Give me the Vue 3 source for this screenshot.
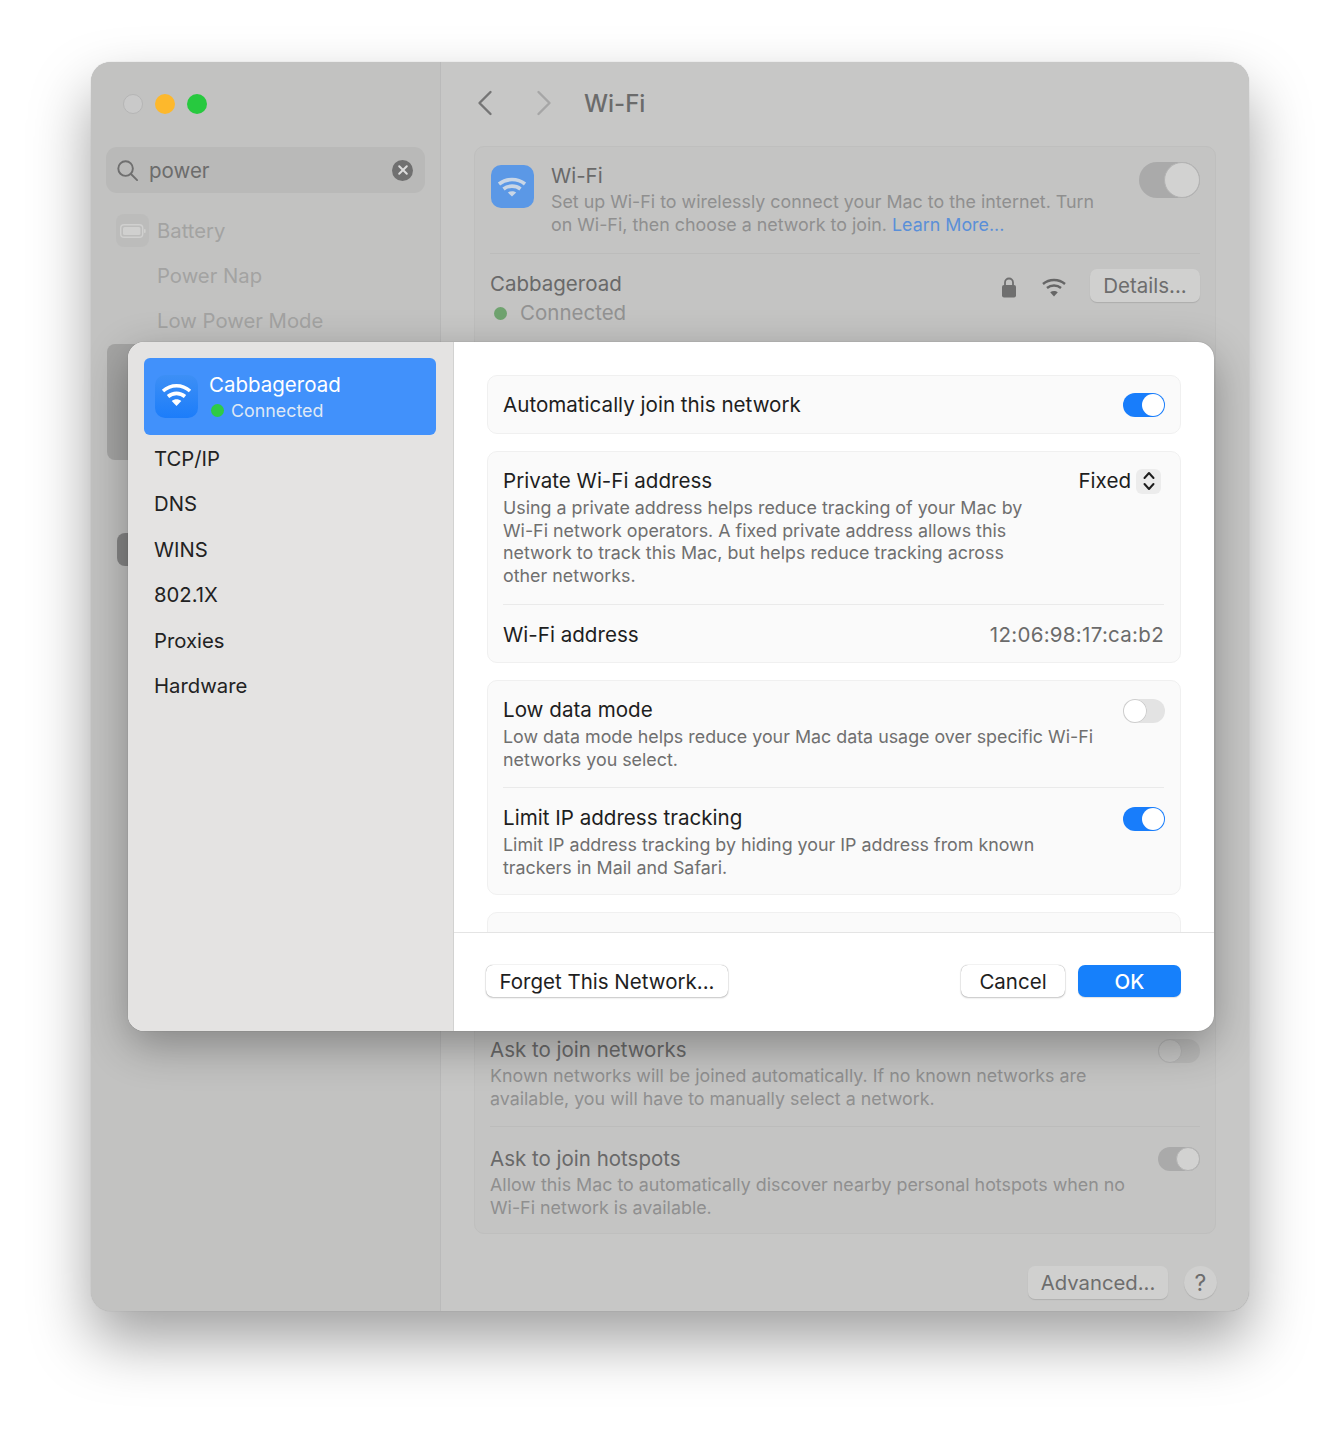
<script setup>
const tabs = ['TCP/IP', 'DNS', 'WINS', '802.1X', 'Proxies', 'Hardware']
</script>

<template>
  <div class="page">
    <div class="window">
      <aside class="side">
        <div class="lights">
          <span class="light grey"></span>
          <span class="light yellow"></span>
          <span class="light green"></span>
        </div>
        <div class="search">
          <svg class="search-ico" width="23" height="23" viewBox="0 0 24 24" fill="none" stroke="#6f6f6f" stroke-width="2" stroke-linecap="round">
            <circle cx="10" cy="10" r="7.6" />
            <path d="M15.6 15.6 22 22" />
          </svg>
          <span class="search-text">power</span>
          <span class="clear">
            <svg width="12" height="12" viewBox="0 0 12 12" stroke="#dcdcdc" stroke-width="2" stroke-linecap="round"><path d="M2.2 2.2l7.6 7.6M9.8 2.2l-7.6 7.6" /></svg>
          </span>
        </div>
        <div class="side-row first">
          <span class="batt-tile">
            <svg width="26" height="14" viewBox="0 0 26 14" fill="none">
              <rect x="0.7" y="0.7" width="22" height="12.6" rx="3.4" stroke="#d0d0cf" stroke-width="1.4" />
              <rect x="3" y="3" width="17.4" height="8" rx="1.6" fill="#d0d0cf" />
              <rect x="24" y="5" width="1.6" height="4" rx="0.8" fill="#d0d0cf" />
            </svg>
          </span>
          <span>Battery</span>
        </div>
        <div class="side-row indent">Power Nap</div>
        <div class="side-row indent">Low Power Mode</div>
        <div class="side-sel"></div>
        <div class="side-icon"></div>
      </aside>

      <main class="main">
        <header class="top">
          <svg width="16" height="26" viewBox="0 0 16 26" fill="none" stroke="#757575" stroke-width="2.4" stroke-linecap="round" stroke-linejoin="round"><path d="M13.5 2 2.5 13l11 11" /></svg>
          <svg class="fwd" width="16" height="26" viewBox="0 0 16 26" fill="none" stroke="#a6a6a6" stroke-width="2.4" stroke-linecap="round" stroke-linejoin="round"><path d="M2.5 2l11 11-11 11" /></svg>
          <h1>Wi-Fi</h1>
        </header>

        <section class="card">
          <div class="wifi-row">
            <span class="wifi-tile">
              <svg width="43" height="43" viewBox="0 0 43 43" fill="none">
                <g stroke="#c9d6e6" stroke-width="3.6">
                  <path d="M8 19c7.500-6 18.500-6 26 0" />
                  <path d="M12.500 24c4.800-3.800 12.200-3.800 17 0" />
                </g>
                <path d="M21 31.500l-4.200-4c2.400-1.800 6-1.800 8.400 0z" fill="#c9d6e6" />
              </svg>
            </span>
            <div class="wifi-text">
              <div class="t-main">Wi-Fi</div>
              <p class="t-desc">Set up Wi-Fi to wirelessly connect your Mac to the internet. Turn on Wi-Fi, then choose a network to join. <span class="link">Learn More...</span></p>
            </div>
            <span class="dim-switch big"><i></i></span>
          </div>
          <div class="rule"></div>
          <div class="net-row">
            <div>
              <div class="t-main">Cabbageroad</div>
              <div class="net-status"><span class="dot-dim"></span>Connected</div>
            </div>
            <div class="net-tools">
              <svg width="16" height="21" viewBox="0 0 16 21" fill="#6f6f6f">
                <rect x="1" y="8" width="14" height="12.500" rx="2" />
                <path d="M4 9V5.500a4 4 0 0 1 8 0V9" fill="none" stroke="#6f6f6f" stroke-width="1.800" />
              </svg>
              <svg class="tool-wifi" width="26" height="20" viewBox="0 0 26 20" fill="none">
                <g stroke="#666" stroke-width="2.400">
                  <path d="M2 7c6.200-5.300 15.800-5.300 22 0" />
                  <path d="M6 11c3.900-3.300 10.100-3.300 14 0" />
                </g>
                <path d="M13 19.500l-3.800-4.200c2.200-1.800 5.400-1.800 7.600 0z" fill="#666" />
              </svg>
              <span class="dim-btn details">Details...</span>
            </div>
          </div>
          <div class="hidden-gap"></div>
          <div class="opt-row">
            <div>
              <div class="t-main">Ask to join networks</div>
              <p class="t-desc">Known networks will be joined automatically. If no known networks are available, you will have to manually select a network.</p>
            </div>
            <span class="dim-switch off"><i></i></span>
          </div>
          <div class="rule"></div>
          <div class="opt-row second">
            <div>
              <div class="t-main">Ask to join hotspots</div>
              <p class="t-desc">Allow this Mac to automatically discover nearby personal hotspots when no Wi-Fi network is available.</p>
            </div>
            <span class="dim-switch on"><i></i></span>
          </div>
        </section>

        <footer class="main-foot">
          <span class="dim-btn advanced">Advanced...</span>
          <span class="help">?</span>
        </footer>
      </main>

      <div class="dialog">
        <nav class="d-side">
          <div class="d-selected">
            <span class="d-tile">
              <svg width="43" height="43" viewBox="0 0 43 43" fill="none">
                <g stroke="#fff" stroke-width="3.600">
                  <path d="M8 16c8-7 19-7 27 0" />
                  <path d="M13 21.500c5-4.200 12-4.200 17 0" />
                </g>
                <path d="M21.500 31l-4.800-5c2.900-2.200 6.700-2.200 9.600 0z" fill="#fff" />
              </svg>
            </span>
            <div>
              <div class="d-name">Cabbageroad</div>
              <div class="d-status"><span class="d-dot"></span>Connected</div>
            </div>
          </div>
          <div v-for="tab in tabs" :key="tab" class="d-tab">{{ tab }}</div>
        </nav>

        <div class="d-body">
          <div class="d-scroll">
            <section class="d-card auto">
              <span class="d-title">Automatically join this network</span>
              <span class="switch on"><i></i></span>
            </section>

            <section class="d-card">
              <div class="d-row priv">
                <div class="d-copy">
                  <div class="d-title">Private Wi-Fi address</div>
                  <p class="d-desc wide">Using a private address helps reduce tracking of your Mac by Wi-Fi network operators. A fixed private address allows this network to track this Mac, but helps reduce tracking across other networks.</p>
                </div>
                <div class="select">
                  <span class="d-title">Fixed</span>
                  <span class="stepper">
                    <svg width="12" height="20" viewBox="0 0 12 20" fill="none" stroke="#1d1d1d" stroke-width="2" stroke-linecap="round" stroke-linejoin="round"><path d="M1.500 7 6 2l4.500 5M1.500 13 6 18l4.500-5" /></svg>
                  </span>
                </div>
              </div>
              <div class="d-rule"></div>
              <div class="d-row addr">
                <span class="d-title">Wi-Fi address</span>
                <span class="addr-val">12:06:98:17:ca:b2</span>
              </div>
            </section>

            <section class="d-card">
              <div class="d-row two">
                <div class="d-copy">
                  <div class="d-title">Low data mode</div>
                  <p class="d-desc">Low data mode helps reduce your Mac data usage over specific Wi-Fi networks you select.</p>
                </div>
                <span class="switch off"><i></i></span>
              </div>
              <div class="d-rule"></div>
              <div class="d-row two lower">
                <div class="d-copy">
                  <div class="d-title">Limit IP address tracking</div>
                  <p class="d-desc">Limit IP address tracking by hiding your IP address from known trackers in Mail and Safari.</p>
                </div>
                <span class="switch on"><i></i></span>
              </div>
            </section>

            <section class="d-card cut"></section>
          </div>

          <footer class="d-foot">
            <button class="btn forget">Forget This Network...</button>
            <span class="spacer"></span>
            <button class="btn cancel">Cancel</button>
            <button class="btn ok">OK</button>
          </footer>
        </div>
      </div>
    </div>
  </div>
</template>

<style>
html, body { margin: 0; background: #fff; }
</style>

<style scoped>
* { box-sizing: border-box; }
.page {
  width: 1340px;
  height: 1431px;
  padding: 62px 91px 0;
  background: #fff;
  font-family: Inter, "Liberation Sans", sans-serif;
  overflow: hidden;
}
.window {
  position: relative;
  display: flex;
  width: 1158px;
  height: 1249px;
  border-radius: 20px;
  background: #c7c7c6;
  box-shadow: 0 30px 60px rgba(0, 0, 0, .37), 0 0 1px rgba(0, 0, 0, .3);
}
.side {
  position: relative;
  flex: 0 0 350px;
  padding: 32px 15px 0 15px;
  background: #c2c2c1;
  border-radius: 20px 0 0 20px;
  border-right: 1px solid #bababa;
}
.lights { display: flex; gap: 12px; padding-left: 17px; }
.light { width: 20px; height: 20px; border-radius: 50%; }
.grey { background: #c9c9c9; border: 1px solid #b5b5b5; }
.yellow { background: #fdb82c; }
.green { background: #27c93f; }
.search {
  display: flex;
  align-items: center;
  height: 46px;
  margin-top: 33px;
  padding: 0 12px 0 10px;
  border-radius: 11px;
  background: #b9b9b8;
}
.search-text { margin-left: 10px; padding-top: 1px; font-size: 20.500px; color: #6c6c6c; }
.clear {
  display: flex;
  align-items: center;
  justify-content: center;
  width: 21px;
  height: 21px;
  margin-left: auto;
  border-radius: 50%;
  background: #707070;
}
.side-row {
  display: flex;
  align-items: center;
  height: 45px;
  font-size: 20.300px;
  color: #a3a3a2;
}
.side-row.first { margin-top: 15px; padding-left: 10px; }
.side-row.first span:last-child { margin-left: 8px; }
.side-row.indent { padding-left: 51px; }
.batt-tile {
  display: flex;
  align-items: center;
  justify-content: center;
  width: 33px;
  height: 33px;
  border-radius: 8px;
  background: #bcbcbb;
}
.side-sel {
  position: absolute;
  left: 16px;
  top: 282px;
  width: 40px;
  height: 116px;
  border-radius: 8px;
  background: #a5a5a4;
}
.side-icon {
  position: absolute;
  left: 26px;
  top: 471px;
  width: 30px;
  height: 33px;
  border-radius: 8px;
  background: #858585;
}

.main { flex: 1; padding: 0 33px 0 33px; }
.top { display: flex; align-items: center; height: 84px; padding: 0 0 2px 3px; }
.fwd { margin-left: 43px; }
.top h1 { margin: 0 0 0 32px; font-size: 24px; font-weight: 500; color: #6b6b6b; }
.card {
  height: 1088px;
  border-radius: 10px;
  background: #c4c4c3;
  border: 1px solid #bfbfbe;
  padding: 0 15px;
}
.t-main { font-size: 20.500px; line-height: 26px; color: #696969; }
.t-desc { margin: 0; font-size: 17.850px; line-height: 22.700px; color: #8f8f8f; }
.link { color: #5a8fd8; }
.wifi-row { display: flex; height: 106px; padding-top: 16px; }
.wifi-row .t-desc { margin-top: 2px; }
.wifi-tile {
  flex: none;
  width: 43px;
  height: 43px;
  margin: 2px 0 0 1px;
  border-radius: 10px;
  background: #5b98e6;
}
.wifi-text { width: 560px; margin-left: 17px; }
.dim-switch {
  position: relative;
  display: block;
  flex: none;
  margin-left: auto;
  border-radius: 18px;
  background: #aaaaaa;
}
.dim-switch i {
  position: absolute;
  top: 0;
  right: 0;
  aspect-ratio: 1;
  height: 100%;
  border-radius: 50%;
  background: #d2d2d1;
  border: 1px solid #b3b3b3;
}
.big { width: 61px; height: 36px; margin-top: -1px; }
.off, .on { width: 42px; height: 24px; }
.dim-switch.off { background: #b9b9b8; }
.dim-switch.off i { left: 0; right: auto; background: #c6c6c5; }
.rule { height: 1px; background: #bcbcbb; }
.net-row { display: flex; justify-content: space-between; padding-top: 17px; }
.net-status { display: flex; align-items: center; margin-top: 3px; font-size: 20.500px; line-height: 26px; color: #929292; }
.dot-dim { width: 13px; height: 13px; margin: 0 13px 0 4px; border-radius: 50%; background: #6fa36f; }
.net-tools { display: flex; align-items: flex-start; margin-top: -2px; }
.net-tools > svg:first-child { margin: 8px 0 0 1px; }
.tool-wifi { margin: 8px 0 0 24px; }
.dim-btn {
  display: flex;
  align-items: center;
  justify-content: center;
  height: 33px;
  border-radius: 7px;
  background: #d0d0cf;
  box-shadow: 0 1px 1px rgba(0, 0, 0, .12);
  font-size: 20.500px;
  color: #6d6d6d;
}
.details { width: 110px; margin-left: 23px; }
.hidden-gap { height: 711px; }
.opt-row { display: flex; justify-content: space-between; align-items: flex-start; height: 89px; }
.opt-row > div { width: 650px; }
.opt-row .t-desc { margin-top: 2px; }
.opt-row .dim-switch { margin-top: 2px; }
.opt-row.second { height: 106px; padding-top: 19px; }
.opt-row.second .dim-switch { margin-top: 1px; }
.main-foot { display: flex; justify-content: flex-end; align-items: center; gap: 16px; margin: 32px -1px 0 0; }
.advanced { width: 140px; height: 33px; font-size: 20.300px; }
.help {
  display: flex;
  align-items: center;
  justify-content: center;
  width: 33px;
  height: 33px;
  border-radius: 50%;
  background: #d0d0cf;
  box-shadow: 0 1px 1px rgba(0, 0, 0, .12);
  font-size: 23px;
  color: #6d6d6d;
}

.dialog {
  position: absolute;
  left: 37px;
  top: 280px;
  display: flex;
  width: 1086px;
  height: 689px;
  border-radius: 16px;
  background: #fff;
  overflow: hidden;
  box-shadow: 0 14px 44px rgba(0, 0, 0, .32), 0 0 1px rgba(0, 0, 0, .4);
}
.d-side {
  flex: 0 0 326px;
  padding: 16px 17px 0 16px;
  background: #e4e3e2;
  border-right: 1px solid #d2d2d1;
}
.d-selected {
  display: flex;
  align-items: center;
  gap: 11px;
  height: 77px;
  margin-bottom: 1px;
  padding-left: 11px;
  border-radius: 6px;
  background: #4191fb;
}
.d-tile {
  flex: none;
  width: 43px;
  height: 43px;
  border-radius: 10px;
  background: linear-gradient(#3d8ff5, #1c7dfa);
}
.d-name { font-size: 20.500px; line-height: 28px; color: #fff; }
.d-status { display: flex; align-items: center; font-size: 17.850px; line-height: 24px; color: #dfe8f5; }
.d-dot { width: 13px; height: 13px; margin: 0 7px 0 2px; border-radius: 50%; background: #2ecb45; }
.d-tab { height: 45.400px; padding-left: 10px; font-size: 20.300px; line-height: 45.400px; color: #222; }

.d-body { display: flex; flex: 1; flex-direction: column; min-width: 0; }
.d-scroll {
  display: flex;
  flex-direction: column;
  gap: 17px;
  flex: 0 0 590px;
  padding: 33px 33px 0;
  overflow: hidden;
}
.d-card {
  flex: none;
  border-radius: 10px;
  background: #fafafa;
  border: 1px solid #f0f0f0;
  padding: 0 16px 0 15px;
}
.d-card.auto {
  display: flex;
  align-items: center;
  justify-content: space-between;
  height: 59px;
  padding-right: 15px;
}
.d-title { font-size: 20.600px; line-height: 26px; color: #1e1e1e; }
.d-desc { margin: 3px 0 0; font-size: 17.850px; line-height: 22.700px; color: #6f6f6f; }
.d-desc.wide { width: 530px; }
.d-row { display: flex; justify-content: space-between; align-items: flex-start; }
.priv { height: 152px; padding-top: 16px; }
.d-rule { height: 1px; background: #eaeaea; }
.addr { align-items: center; height: 57px; padding-top: 2px; }
.addr-val { font-size: 20.500px; letter-spacing: .3px; color: #6b6b6b; }
.two { height: 106px; padding-top: 16px; }
.two.lower { padding-top: 17px; }
.two .switch { margin: 2px -1px 0 0; }
.two.lower .switch { margin-top: 2px; }
.d-copy { width: 600px; }
.select { display: flex; align-items: center; gap: 5px; margin-right: 3px; }
.stepper {
  display: flex;
  align-items: center;
  justify-content: center;
  width: 25px;
  height: 25px;
  border-radius: 6px;
  background: #ececec;
}
.switch {
  position: relative;
  display: block;
  flex: none;
  width: 42px;
  height: 24px;
  border-radius: 12px;
  background: #187dfb;
}
.switch i {
  position: absolute;
  top: 1px;
  right: 1px;
  width: 22px;
  height: 22px;
  border-radius: 50%;
  background: #fff;
}
.switch.off { background: #e3e3e3; }
.switch.off i { top: 0; left: 0; right: auto; width: 24px; height: 24px; box-shadow: inset 0 0 0 1px #cdcdcd; }
.cut { height: 60px; }
.d-foot {
  display: flex;
  align-items: center;
  flex: 1;
  gap: 13px;
  padding: 0 33px 2px 32px;
  border-top: 1px solid #e4e4e4;
}
.spacer { flex: 1; }
.btn {
  height: 32px;
  padding: 0;
  border: 0;
  border-radius: 7px;
  background: #fff;
  font-family: inherit;
  font-size: 20.500px;
  color: #1e1e1e;
  box-shadow: 0 0 1px rgba(0, 0, 0, .45), 0 1px 2px rgba(0, 0, 0, .2);
}
.forget { width: 242px; }
.cancel { width: 104px; }
.ok { width: 103px; background: #1680fb; color: #fff; font-weight: 500; box-shadow: 0 1px 1px rgba(0, 0, 0, .12); }
</style>
